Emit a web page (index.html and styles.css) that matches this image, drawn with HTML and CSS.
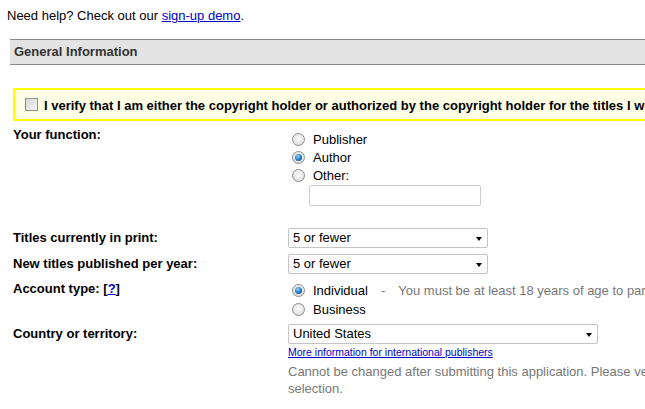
FILE: index.html
```html
<!DOCTYPE html>
<html>
<head>
<meta charset="utf-8">
<link rel="stylesheet" href="styles.css">
</head>
<body>
<div class="page">
  <p class="help">Need help? Check out our <a href="#">sign-up demo</a>.</p>
  <div class="section-bar">General Information</div>
  <div class="verify">
    <span class="checkbox"></span>
    <span class="verify-text">I verify that I am either the copyright holder or authorized by the copyright holder for the titles I will submit.</span>
  </div>
  <div class="form">
    <div class="row row-top">
      <div class="label">Your function:</div>
      <div class="control radios">
        <div class="opt"><span class="radio"></span><span>Publisher</span></div>
        <div class="opt"><span class="radio checked"></span><span>Author</span></div>
        <div class="opt"><span class="radio"></span><span>Other:</span></div>
        <div class="text-input"></div>
      </div>
    </div>
    <div class="row row-select row-titles">
      <div class="label">Titles currently in print:</div>
      <div class="control"><div class="select short">5 or fewer</div></div>
    </div>
    <div class="row row-select row-new">
      <div class="label">New titles published per year:</div>
      <div class="control"><div class="select short">5 or fewer</div></div>
    </div>
    <div class="row row-top row-account">
      <div class="label">Account type: [<a href="#">?</a>]</div>
      <div class="control radios radios-account">
        <div class="opt"><span class="radio checked"></span><span>Individual</span><span class="note dash">-</span><span class="note age">You must be at least 18 years of age to participate.</span></div>
        <div class="opt"><span class="radio"></span><span>Business</span></div>
      </div>
    </div>
    <div class="row row-top row-country">
      <div class="label label-country">Country or territory:</div>
      <div class="control">
        <div class="select long">United States</div>
        <a class="small-link" href="#">More information for international publishers</a>
        <p class="hint">Cannot be changed after submitting this application. Please verify your selection.</p>
      </div>
    </div>
  </div>
</div>
</body>
</html>
```

FILE: styles.css
```css
html, body {
  margin: 0;
  padding: 0;
  overflow: hidden;
  background: #fff;
}
body {
  font-family: "Liberation Sans", Arial, sans-serif;
  font-size: 13px;
  color: #000;
}
a { color: #0000cc; }
.page {
  width: 1000px;
  padding-top: 8px;
}
.help {
  margin: 0 0 0 7px;
  line-height: 15px;
}
.section-bar {
  margin: 16px 0 0 10px;
  border-top: 1px solid #8a8a8a;
  border-bottom: 1px solid #8a8a8a;
  background: #e3e3e3;
  height: 24px;
  line-height: 24px;
  padding-left: 4px;
  font-weight: bold;
  color: #333;
}
.verify {
  margin: 23px 0 0 13px;
  border: 2px solid #ffff00;
  background: #ffffe6;
  height: 29px;
  display: flex;
  align-items: center;
  padding-left: 10px;
  white-space: nowrap;
}
.checkbox {
  width: 13px;
  height: 13px;
  box-sizing: border-box;
  border: 1px solid #8e8f8f;
  background: linear-gradient(135deg, #d6d6d6, #f6f6f6);
  flex: none;
}
.verify-text {
  margin-left: 6px;
  font-weight: bold;
  line-height: 15px;
  padding-top: 1px;
}
.form {
  margin-top: 6px;
}
.row {
  display: grid;
  grid-template-columns: 275px 460px;
  padding-left: 13px;
}
.row-top { align-items: start; }
.row-select { align-items: center; height: 20px; }
.label {
  font-weight: bold;
  line-height: 16px;
}
.label a { font-weight: bold; }
.radios { padding-top: 3px; }
.opt {
  display: flex;
  align-items: center;
  height: 18px;
  white-space: nowrap;
}
.radio {
  flex: none;
  width: 13px;
  height: 13px;
  box-sizing: border-box;
  border-radius: 50%;
  border: 1px solid #8c8c8c;
  background: radial-gradient(circle at 50% 40%, #fbfbfb 0%, #e2e2e2 70%, #cfcfcf 100%);
  margin: 0 8px 0 4px;
  position: relative;
}
.radio.checked::after {
  content: "";
  position: absolute;
  left: 2px;
  top: 2px;
  width: 7px;
  height: 7px;
  border-radius: 50%;
  background: radial-gradient(circle at 40% 35%, #9ad6ff 0%, #2a86d0 45%, #0b3f72 100%);
}
.text-input {
  margin: 1px 0 0 21px;
  width: 172px;
  height: 21px;
  box-sizing: border-box;
  border: 1px solid #cdcdcd;
  border-radius: 2px;
  background: #fff;
}
.row-titles { margin-top: 22px; }
.row-new { margin-top: 6px; }
.row-account { margin-top: 7px; }
.radios-account { padding-top: 0; }
.radios-account .opt { height: 19px; }
.note { color: #777; }
.dash { margin-left: 13px; }
.age { margin-left: 13px; }
.row-country { margin-top: 5px; }
.label-country { line-height: 20px; }
.select {
  position: relative;
  box-sizing: border-box;
  height: 20px;
  line-height: 18px;
  border: 1px solid #c4c4c4;
  border-radius: 2px;
  padding-left: 4px;
  background: #fff;
  color: #000;
}
.select::after {
  content: "";
  position: absolute;
  right: 5px;
  top: 8px;
  border-left: 3.5px solid transparent;
  border-right: 3.5px solid transparent;
  border-top: 4px solid #000;
}
.select.short { width: 200px; }
.select.long { width: 310px; }
.small-link {
  display: inline-block;
  font-size: 10.5px;
  line-height: 12px;
  margin-top: 1px;
}
.hint {
  margin: 4px 0 0 0;
  color: #777;
  line-height: 17px;
  width: 440px;
}
```
